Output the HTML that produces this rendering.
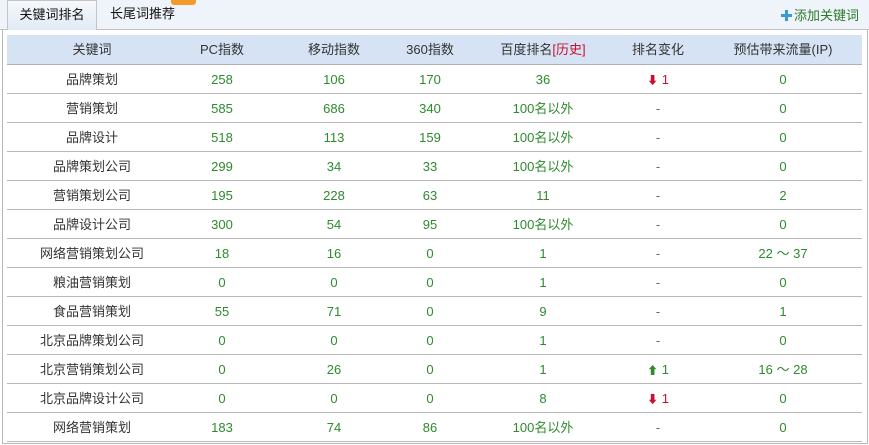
<!DOCTYPE html>
<html><head><meta charset="utf-8"><style>
*{margin:0;padding:0;box-sizing:border-box}
body{width:869px;height:445px;background:#fff;font-family:"Liberation Sans","Noto Sans CJK SC",sans-serif;font-size:13px;color:#333;position:relative;overflow:hidden}
.frame{position:absolute;left:2px;top:29px;width:866px;height:415px;border:1px solid #b8b8b8;border-top:1px solid #c4c4c4}
.tabbar{position:absolute;left:0;top:0;width:869px;height:30px;background:#eef4f9;border-bottom:1px solid #c4c4c4}
.tab1{position:absolute;left:7px;top:0;width:90px;height:30px;background:linear-gradient(#f6f9fc,#e0eaf4);border:1px solid #c4c4c4;border-bottom:none;text-align:center;line-height:28px;color:#111}
.tab2{position:absolute;left:110px;top:0;line-height:28px;color:#111}
.badge{position:absolute;left:171px;top:-4px;width:25px;height:9px;background:#f39a2b;border-radius:3px}
.add{position:absolute;right:10px;top:5px;color:#2a7a2a;font-size:13px}
.plus{display:inline-block;width:11px;height:11px;position:relative;vertical-align:-1px;margin-right:2px}
.plus:before{content:"";position:absolute;left:4px;top:0;width:3px;height:11px;background:#3a9ad9}
.plus:after{content:"";position:absolute;left:0;top:4px;width:11px;height:3px;background:#3a9ad9}
.head{position:absolute;left:7px;top:35px;width:855px;height:30px;background:#d5e3f4;border-bottom:1px solid #b0b0b0}
.row{position:absolute;left:7px;width:855px;height:29px;border-bottom:1px solid #b8b8b8}
.c{position:absolute;width:160px;margin-left:-80px;text-align:center;line-height:29px}
.g{color:#2d8a2d}
.r{color:#c8102e}
.gr{color:#2d8a2d}
</style></head><body>
<div class="tabbar"></div>
<div class="frame"></div>
<div class="tab1">关键词排名</div>
<div class="tab2">长尾词推荐</div>
<div class="badge"></div>
<div class="add"><span class="plus"></span>添加关键词</div>
<div class="head">
<div class="c" style="left:85px">关键词</div>
<div class="c" style="left:215px">PC指数</div>
<div class="c" style="left:327px">移动指数</div>
<div class="c" style="left:423px">360指数</div>
<div class="c" style="left:536px">百度排名<span class="r">[历史]</span></div>
<div class="c" style="left:651px">排名变化</div>
<div class="c" style="left:776px">预估带来流量(IP)</div>
</div>
<div id="rows"></div>
<script>
var d=[["品牌策划","258","106","170","36","d","0"],["营销策划","585","686","340","100名以外","-","0"],["品牌设计","518","113","159","100名以外","-","0"],["品牌策划公司","299","34","33","100名以外","-","0"],["营销策划公司","195","228","63","11","-","2"],["品牌设计公司","300","54","95","100名以外","-","0"],["网络营销策划公司","18","16","0","1","-","22 ～ 37"],["粮油营销策划","0","0","0","1","-","0"],["食品营销策划","55","71","0","9","-","1"],["北京品牌策划公司","0","0","0","1","-","0"],["北京营销策划公司","0","26","0","1","u","16 ～ 28"],["北京品牌设计公司","0","0","0","8","d","0"],["网络营销策划","183","74","86","100名以外","-","0"]];
var x=[85,215,327,423,536,651,776],h="";
d.forEach(function(r,i){h+='<div class="row" style="top:'+(65+i*29)+'px">';
r.forEach(function(v,j){var cls=j==0?'':'g',t=v;
if(j==5){if(v=='d'){t='<span class="r">🡇 1</span>';t='<span class="r"><b style="font-size:11px">&#11015;</b> 1</span>';}else if(v=='u'){t='<span class="g"><b style="font-size:11px">&#11014;</b> 1</span>';}else{t='<span style="color:#666">-</span>';}}
h+='<div class="c '+cls+'" style="left:'+x[j]+'px">'+t+'</div>';});h+='</div>';});
document.getElementById('rows').innerHTML=h;
</script>
</body></html>
